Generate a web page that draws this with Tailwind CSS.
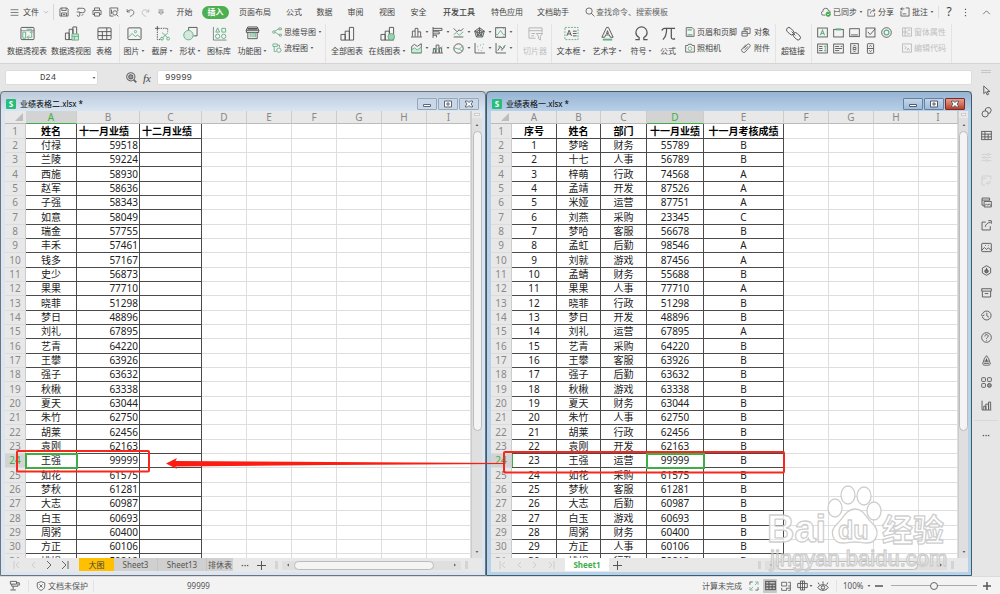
<!DOCTYPE html>
<html lang="zh-CN">
<head>
<meta charset="utf-8">
<meta name="viewport" content="width=device-width, initial-scale=1">
<title>业绩表格一.xlsx</title>
<script src="https://cdn.jsdelivr.net/npm/@tailwindcss/browser@4"></script>
</head>
<body class="h-screen overflow-hidden flex flex-col bg-[#e6e6e6] text-[8px] leading-3 text-[#444] whitespace-nowrap font-['Noto_Sans','Noto_Sans_CJK_SC',sans-serif]">

<!-- Icon library, all on a 16-unit grid -->
<svg class="hidden" aria-hidden="true">
  <symbol id="menu" viewBox="0 0 16 16"><path d="M1 3h14M1 8h14M1 13h14"/></symbol>
  <symbol id="chev" viewBox="0 0 16 16"><path d="M2 5l6 6 6-6"/></symbol>
  <symbol id="chevup" viewBox="0 0 16 16"><path d="M2 11l6-6 6 6"/></symbol>
  <symbol id="caret" viewBox="0 0 16 16"><path d="M2 4h12l-6 8z" fill="#666" stroke="none"/></symbol>
  <symbol id="save" viewBox="0 0 16 16"><path d="M1.500 3.500a2 2 0 0 1 2-2h9l2 2v11h-13zM4.500 1.500v4h7v-4M4 14.500v-5h8v5M6 12h4"/></symbol>
  <symbol id="pdf" viewBox="0 0 16 16"><path d="M3 5V2h8a3.500 3.500 0 0 1 0 7H6M1 8h5v5a2 2 0 0 1-4 0M9 14l3-3"/></symbol>
  <symbol id="print" viewBox="0 0 16 16"><path d="M4 5V1.500h8V5M4 12H1.500V5.500h13V12H12M4 9h8v5.500H4z"/></symbol>
  <symbol id="preview" viewBox="0 0 16 16"><path d="M14 7V1.500H1.500v13H7"/><circle cx="9.500" cy="9.500" r="3.500"/><path d="M12 12l3 3M4 4v7"/></symbol>
  <symbol id="undo" viewBox="0 0 16 16"><path d="M2 2v5h5M2 7c3-5 12-5 12 1 0 4-4 6-7 7"/></symbol>
  <symbol id="redo" viewBox="0 0 16 16"><path d="M14 2v5H9M14 7C11 2 2 2 2 8c0 4 4 6 7 7"/></symbol>
  <symbol id="qat" viewBox="0 0 16 16"><path d="M3 4h10M3 8h10l-5 5z"/></symbol>
  <symbol id="search" viewBox="0 0 16 16"><circle cx="6.500" cy="6.500" r="5"/><path d="M10 10l5 5"/></symbol>
  <symbol id="zoomin" viewBox="0 0 16 16"><circle cx="7" cy="7" r="6"/><circle cx="7" cy="7" r="3" fill="#999"/><path d="M11 11l4 4" stroke-width="2.500"/></symbol>
  <symbol id="cloud" viewBox="0 0 16 16"><path d="M7 13H4a3 3 0 0 1-1-6 4.500 4.500 0 0 1 9-1 3 3 0 0 1 3 3"/><circle cx="11.500" cy="11.500" r="3.500" fill="#3fae49" stroke="#3fae49"/><path d="M10 11.500l1.200 1.200 2-2" stroke="#fff"/></symbol>
  <symbol id="share" viewBox="0 0 16 16"><path d="M7 3H1.500v11.500h12V9M6 10c0-4 3-6 8-6M11 1l3.500 3L11 7"/></symbol>
  <symbol id="comment" viewBox="0 0 16 16"><path d="M1.500 6v8.500h13v-13H9M4 11h6M1 3h6M4 1L1 3l3 2"/></symbol>
  <symbol id="more" viewBox="0 0 16 16"><path d="M8 1.500v2M8 7v2M8 12.500v2" stroke-width="2"/></symbol>

  <symbol id="pivot" viewBox="0 0 16 16"><rect x="1" y="1.500" width="14" height="13" rx="1"/><path d="M1 5h14" stroke-width=".6"/><path d="M3 6.500h3v6.500H3zM8 12h4.500V6M10.500 7.500l2-2 2 2M9.500 10L7.500 12l2 2M7 3.500h6" stroke="#63b184"/></symbol>
  <symbol id="pivotchart" viewBox="0 0 16 16"><path d="M1.500 7.500h4v7h-4zM5.500 3.500h4v11h-4zM9.500 1h4v8h-4z"/><path d="M8.500 8.500h7v6.500h-7zM8.500 11h7M11 11v4" stroke="#63b184" fill="#cfe9d9"/></symbol>
  <symbol id="table" viewBox="0 0 16 16"><rect x="1" y="2" width="14" height="12.500" rx="1"/><path d="M1 6h14M1 10.200h14M5.700 6v8.500M10.400 2v12.500"/></symbol>
  <symbol id="image" viewBox="0 0 16 16"><rect x="1" y="2" width="14" height="12.500" rx="1"/><path d="M1.500 12l4-4 3.500 3.500 2-2 3.500 3" stroke="#63b184"/><circle cx="9" cy="6" r="1.200" stroke="#63b184"/></symbol>
  <symbol id="shot" viewBox="0 0 16 16"><path d="M2.500 0v5M0 2.500h5"/><path d="M6 2.500h7.500V6M2.500 6v8.500H7" stroke-dasharray="1.500 1"/><path d="M7.500 7l6 5.500M14 7l-6 5.500" stroke="#63b184"/><circle cx="7.500" cy="13.500" r="1.500" stroke="#63b184"/><circle cx="14" cy="13.500" r="1.500" stroke="#63b184"/></symbol>
  <symbol id="shape" viewBox="0 0 16 16"><path d="M6 5V1.500h9v9h-4"/><circle cx="5.800" cy="9.800" r="5" stroke="#63b184" fill="#d5e8dd"/></symbol>
  <symbol id="iconlib" viewBox="0 0 16 16"><path d="M1.500 1v14h14" stroke-width=".7"/><path d="M6 2l2 4.500H4zM10.500 2.500h4v4h-4z" stroke="#63b184"/><circle cx="6" cy="11" r="2.300" stroke="#63b184"/><circle cx="12.500" cy="11" r="2.300" stroke="#63b184"/></symbol>
  <symbol id="barcode" viewBox="0 0 16 16"><path d="M1 5l2-4h10l2 4zM1.500 5v2h13V5M3 7v6.500h10V7" /><path d="M2.500 3h11" stroke-width="2"/><path d="M5.500 7v5M7.500 7v5M9.500 7v5M11 7v5" stroke="#63b184"/></symbol>
  <symbol id="mind" viewBox="0 0 16 16"><g stroke="#63a57f"><circle cx="3" cy="8" r="2"/><path d="M4.500 6.500L11 3M5 8.500l7 4.500M11 1.500h4v3h-4zM12 11.500h3v3h-3z"/></g></symbol>
  <symbol id="flow" viewBox="0 0 16 16"><g stroke="#63a57f"><path d="M1.500 1.500h7v4h-7zM3.500 5.500v8H7M12 7V3.500H9"/><circle cx="11" cy="11.500" r="3.500"/></g></symbol>
  <symbol id="bars3" viewBox="0 0 16 16"><path d="M1 9h4.500v6H1zM5.500 5.500H10V15H5.500zM10 1.500h4.500V15H10z"/></symbol>
  <symbol id="onlinebars" viewBox="0 0 16 16"><path d="M1 9h4.500v6H1zM5.500 5.500H10V15H5.500zM10 1.500h4.500V15H10z"/><circle cx="12" cy="11.500" r="3.500" fill="#9fcfb3" stroke="#63b184"/></symbol>
  <symbol id="col" viewBox="0 0 16 16"><path d="M2 14V6h4v8M6 6V2h4v12M10 7h4v7M0 14.500h16"/></symbol>
  <symbol id="hbar" viewBox="0 0 16 16"><path d="M1.500 0v16M1.500 2h13v3h-13M1.500 7h9v3h-9M1.500 12h5v3"/></symbol>
  <symbol id="line" viewBox="0 0 16 16"><path d="M1 2l5 5 3-3 2 2 4-4M1 14.500h14"/><path d="M1 11l4-3 4 4 6-5" stroke="#63b184"/></symbol>
  <symbol id="radar" viewBox="0 0 16 16"><path d="M8 1l7 5-2.500 8.500h-9L1 6z" fill="#c9d6ce"/><path d="M8 4l4 3-1.500 5h-5L4 7zM8 1v8M1 6l7 3 7-3M3.500 14.500L8 9l4.500 5.500"/></symbol>
  <symbol id="stock" viewBox="0 0 16 16"><rect x="1" y="1" width="14" height="14"/><path d="M1 11h3l4-6 4 6h3M4 1v2M12 1v2M4 15v-2M12 15v-2" stroke="#63b184"/></symbol>
  <symbol id="area" viewBox="0 0 16 16"><path d="M1 14.500V5l4-3 4 3 6-4v13.500z"/><path d="M1 10l4-3 4 3 6-4v8H1z" stroke="#63b184" fill="#d5e8dd"/></symbol>
  <symbol id="combo" viewBox="0 0 16 16"><path d="M2 14V8h3v6M6 14V3h4v11M11 14V7h3v7M0 14.500h16"/><path d="M1 11l6-3 3 2 5-5" stroke="#63b184"/></symbol>
  <symbol id="pie" viewBox="0 0 16 16"><circle cx="8" cy="8" r="6.800"/><path d="M1.500 7L9 9l5-5M9 9l5 3" stroke="#63b184"/></symbol>
  <symbol id="scatter" viewBox="0 0 16 16"><path d="M1.500 0v14.500H16"/><path d="M5 5h1M9 3h1M12 7h1M6 10h1M10 11h1M13 2h1" stroke="#63b184" stroke-width="2"/></symbol>
  <symbol id="other" viewBox="0 0 16 16"><path d="M1.500 0v14.500H16"/><path d="M4 11l4-6 3 4 4-6" /><path d="M5 5h2M9 10h2M12 6h2" stroke="#63b184" stroke-width="2.500"/></symbol>
  <symbol id="slicer" viewBox="0 0 16 16"><path d="M8 13H1V2h14v5M1 5h14M3.500 8h4M3.500 10.500h3M9 8h6.500l-2.300 3v4l-2-1.500V11z"/></symbol>
  <symbol id="textbox" viewBox="0 0 16 16"><rect x="1" y="1.500" width="14" height="13" stroke="#63b184" stroke-dasharray="2 1.200"/><path d="M3 10.500L5.500 4.500 8 10.500M4 8.500h3M9.500 5.500h4M9.500 8h4M9.500 10.500h4"/></symbol>
  <symbol id="wordart" viewBox="0 0 16 16"><path d="M2 12L7 1.500h2L14 12h-3l-1-2.500H6L5 12zM8 5L7 8h2z"/><path d="M3 14.500h10" stroke="#63b184" stroke-width="2"/></symbol>
  <symbol id="omega" viewBox="0 0 16 16"><path d="M1.500 14.500h4v-2.200C3 11 2 9 2 7a6 6 0 0 1 12 0c0 2-1 4-3.500 5.300v2.200h4" stroke-width="1.300"/></symbol>
  <symbol id="pi" viewBox="0 0 16 16"><path d="M1 5c.5-2 1.500-2.500 3-2.500h11M6 3c0 5-1 9-4 11.500M11 3v9c0 2 2 2.500 4 1.500" stroke-width="1.300"/></symbol>
  <symbol id="headfoot" viewBox="0 0 16 16"><path d="M2 1h9.500L14.500 4v11H2z"/><path d="M4 4.500h7M4 12.500h8" stroke="#63b184" stroke-width="2"/></symbol>
  <symbol id="camera" viewBox="0 0 16 16"><path d="M1 4h3.500l1-2h5l1 2H15v10.500H1z"/><circle cx="8" cy="9" r="3" stroke="#63b184"/></symbol>
  <symbol id="object" viewBox="0 0 16 16"><path d="M5 6V1.500h9.500v9H11M1.500 7h8.500v7.500H1.500zM1.500 10H10M7 6V4h5"/></symbol>
  <symbol id="clip" viewBox="0 0 16 16"><path d="M4 9l6-6.500a2.500 2.500 0 0 1 4 3.500l-7 8a3.500 3.500 0 0 1-5-5l6-6.500M6 11l5-5.500"/></symbol>
  <symbol id="link" viewBox="0 0 16 16"><rect x="0" y="3" width="9" height="5" rx="2.500" transform="rotate(45 4.500 5.500)"/><rect x="7" y="8.500" width="9" height="5" rx="2.500" transform="rotate(45 11.500 11)"/><path d="M6 6l4 4"/></symbol>
  <symbol id="fLabel" viewBox="0 0 16 16"><rect x="1" y="1.500" width="14" height="13"/><path d="M5 12l3-7.500 3 7.500M6 9.500h4" stroke="#63b184" stroke-width="1.500"/></symbol>
  <symbol id="fGroup" viewBox="0 0 16 16"><rect x="1" y="3.500" width="14" height="11"/><path d="M4 3.500h8" stroke="#63b184" stroke-width="3"/></symbol>
  <symbol id="fButton" viewBox="0 0 16 16"><rect x="1" y="2.500" width="14" height="11.500"/><path d="M3 11.500h10"/></symbol>
  <symbol id="fCheck" viewBox="0 0 16 16"><rect x="1.500" y="1.500" width="13" height="13"/><path d="M4 7l3.500 4L14.500 3"/></symbol>
  <symbol id="fRadio" viewBox="0 0 16 16"><circle cx="8" cy="8" r="7"/><circle cx="8" cy="8" r="3.500" stroke="#63b184" stroke-width="1.800"/></symbol>
  <symbol id="fList" viewBox="0 0 16 16"><rect x="1" y="1.500" width="14" height="13"/><path d="M3 5h5M3 8h5M3 11h5"/><path d="M12 4v8M10.500 5.500L12 4l1.500 1.500M10.500 10.500L12 12l1.500-1.500" stroke="#63b184"/></symbol>
  <symbol id="fCombo" viewBox="0 0 16 16"><rect x="1" y="1.500" width="14" height="13"/><path d="M3 5h6M11 5h2.500M3 8h10M3 11h6"/></symbol>
  <symbol id="fScroll" viewBox="0 0 16 16"><rect x="2.500" y="1" width="11" height="14"/><path d="M6 5l2-2 2 2M6 11l2 2 2-2M6 6.500h4v3H6z"/></symbol>
  <symbol id="fSpin" viewBox="0 0 16 16"><rect x="3.500" y="1" width="9" height="14" rx="1"/><path d="M3.500 8h9M6 5.500l2-2 2 2M6 10.500l2 2 2-2"/></symbol>
  <symbol id="props" viewBox="0 0 16 16"><rect x="1" y="1.500" width="14" height="13"/><path d="M1 8h8M5 1.500v13M9 5h4M8 11h5"/></symbol>
  <symbol id="code" viewBox="0 0 16 16"><rect x="1" y="1.500" width="14" height="13"/><path d="M4 5l3 2.500L4 10M8 12l2-4 2 4"/></symbol>

  <symbol id="cursor" viewBox="0 0 16 16"><path d="M4 1.500v11l3-2.500 2 4.500 2-1-2-4h4z"/></symbol>
  <symbol id="shapes2" viewBox="0 0 16 16"><path d="M6.500 6V2.500L9 1h4l2 3.500-2 4.500h-3"/><circle cx="6" cy="10" r="4.500"/></symbol>
  <symbol id="grid" viewBox="0 0 16 16"><rect x="1" y="2" width="14" height="12"/><path d="M1 6h14M1 10h14M5.700 2v12M10.400 6v8"/></symbol>
  <symbol id="sliders" viewBox="0 0 16 16"><path d="M1 3.500h8M12 3.500h3M1 8h2M6 8h9M1 12.500h6M10 12.500h5"/><circle cx="10.500" cy="3.500" r="1.500"/><circle cx="4.500" cy="8" r="1.500"/><circle cx="8.500" cy="12.500" r="1.500"/></symbol>
  <symbol id="pivot2" viewBox="0 0 16 16"><path d="M6 14.500H1.500v-13h13V6M1.500 5h6M13 8v4H8M10 10l-2 2 2 2"/></symbol>
  <symbol id="layers" viewBox="0 0 16 16"><path d="M4 12H1.500V1.500h11V5M1.500 4.500h11M4.500 6.500H15V14.500H4.500zM5 13l3-3 2 2 2-2 3 3"/></symbol>
  <symbol id="export" viewBox="0 0 16 16"><path d="M7 3H1.500v11.500h12V9M6 10c1-4 4-6.500 8-6.500M10.500 1H15v4.500"/></symbol>
  <symbol id="pic" viewBox="0 0 16 16"><rect x="1" y="2" width="14" height="12" rx="1"/><path d="M1 12l4-4 3 3 2.500-2.500L15 12M10 5h1M6 5h1"/></symbol>
  <symbol id="hexa" viewBox="0 0 16 16"><path d="M8 1l6 3.500v7L8 15l-6-3.500v-7z"/><circle cx="8" cy="9" r="2.500" fill="#777"/><path d="M8 4v4"/></symbol>
  <symbol id="box" viewBox="0 0 16 16"><path d="M1 2.500h14V6H1zM2 6v8.500h12V6M5.500 9.500h5"/></symbol>
  <symbol id="history" viewBox="0 0 16 16"><path d="M2 6a6.500 6.500 0 1 1 0 4M0 6l2 3 3-2M8.500 4v4.500l3 2"/></symbol>
  <symbol id="help" viewBox="0 0 16 16"><circle cx="8" cy="8" r="7"/><path d="M5.500 6.500c0-3.500 5-3.500 5-.5 0 2-2.500 1.800-2.500 3.800M8 11.500v1.200"/></symbol>
  <symbol id="bell" viewBox="0 0 16 16"><path d="M8 1l3 4 2 6c2 3-1 4-5 4s-7-1-5-4l2-6z"/><path d="M5 9h6M4 12h8M8 5v3" stroke-width="1.800"/></symbol>
  <symbol id="apps" viewBox="0 0 16 16"><rect x="1" y="1" width="5.500" height="5.500" rx="1"/><rect x="9.500" y="1" width="5.500" height="5.500" rx="1"/><rect x="1" y="9.500" width="5.500" height="5.500" rx="1"/><circle cx="12.200" cy="12.200" r="2.800" fill="#999"/></symbol>
  <symbol id="chart" viewBox="0 0 16 16"><path d="M1.500 1v13.500H15M4 14V9h3v5M7 14V6h4v8M11 14V3h3v11"/></symbol>

  <symbol id="dock" viewBox="0 0 16 16"><path d="M2 2h9v4H2zM4 6v3h9V5M11 4h4v4M2 14.500h8M6 9v5"/></symbol>
  <symbol id="shield" viewBox="0 0 16 16"><path d="M8 1l6 2v5c0 4-3 6-6 7-3-1-6-3-6-7V3zM5.500 5.500l5 5M10.500 5.500l-5 5"/></symbol>
  <symbol id="full" viewBox="0 0 16 16"><path d="M1.500 6V1.500H6M10 14.500h4.500V10"/><path d="M10 1.500h4.500V6M6 14.500H1.500V10M9.500 6.500l4-4M6.500 9.500l-4 4" stroke="#63b184"/></symbol>
  <symbol id="pagebreak" viewBox="0 0 16 16"><path d="M1 2h8v6H1zM15 2v13M11.500 2H15M1 11v4h8v-4M9 11.500h6M11.500 8H15M11.500 15H15"/></symbol>
  <symbol id="crossview" viewBox="0 0 16 16"><path d="M5 1.500h6v13H5zM1 5h14v6H1zM8 1.500v13"/></symbol>
  <symbol id="eye" viewBox="0 0 16 16"><path d="M1 10c3-5 11-5 14 0-3 5-11 5-14 0zM3 6L1.500 3.500M8 5V2M13 6l1.500-2.500"/><circle cx="8" cy="10" r="2.300"/></symbol>
</svg>

<!-- Menu row and ribbon -->
<header class="shrink-0 bg-[#f3f3f3] border-b border-[#d4d4d4] [&_svg]:fill-none [&_svg]:stroke-[#555] [&_svg]:stroke-[1.3] [&_svg]:shrink-0">
  <nav class="flex items-center h-6" aria-label="菜单">
    <button class="flex items-center gap-1 pl-[10px] w-[53px]"><svg class="size-[9px]"><use href="#menu"/></svg>文件<svg class="size-[6px] opacity-60"><use href="#chev"/></svg></button>
    <span class="w-px h-4 bg-[#d8d8d8]"></span>
    <div class="flex items-center w-[111px] justify-between pl-[5px]">
      <button aria-label="保存"><svg class="size-[10px]"><use href="#save"/></svg></button>
      <button aria-label="输出为PDF"><svg class="size-[10px]"><use href="#pdf"/></svg></button>
      <button aria-label="打印"><svg class="size-[10px]"><use href="#print"/></svg></button>
      <button aria-label="打印预览"><svg class="size-[10px]"><use href="#preview"/></svg></button>
      <button aria-label="撤销"><svg class="size-[9px]"><use href="#undo"/></svg></button>
      <button aria-label="恢复" class="opacity-40"><svg class="size-[9px]"><use href="#redo"/></svg></button>
      <button aria-label="自定义快速访问"><svg class="size-2"><use href="#qat"/></svg></button>
    </div>
    <div class="flex items-center ml-1">
      <button class="w-[31px]">开始</button>
      <button class="w-[27px] mx-[2px] h-[13px] rounded-full bg-[#4caf50] text-white font-bold">插入</button>
      <button class="w-12">页面布局</button>
      <button class="w-[30px]">公式</button>
      <button class="w-[31px]">数据</button>
      <button class="w-[31px]">审阅</button>
      <button class="w-[32px]">视图</button>
      <button class="w-[31px]">安全</button>
      <button class="w-[50px] font-medium">开发工具</button>
      <button class="w-[46px]">特色应用</button>
      <button class="w-[46px]">文档助手</button>
    </div>
    <label class="flex items-center gap-px ml-[9px]"><svg class="size-[10px]"><use href="#search"/></svg><input class="w-[90px] outline-none bg-transparent placeholder:text-[#666]" aria-label="查找" placeholder="查找命令、搜索模板"></label>
    <div class="flex items-center ml-auto pr-[9px]">
      <button class="flex items-center gap-[2px] w-[46px]"><svg class="size-[10px]"><use href="#cloud"/></svg>已同步<svg class="size-1"><use href="#caret"/></svg></button>
      <button class="flex items-center gap-[2px] w-[33px]"><svg class="size-[9px]"><use href="#share"/></svg>分享</button>
      <button class="flex items-center gap-[2px] w-[38px]"><svg class="size-[10px]"><use href="#comment"/></svg>批注<svg class="size-1"><use href="#caret"/></svg></button>
      <span class="w-px h-3 bg-[#ddd]"></span>
      <button class="w-5 text-[12px]">?</button>
      <button class="w-3 flex justify-center" aria-label="更多"><svg class="size-[9px]"><use href="#more"/></svg></button>
      <button class="w-5 flex justify-end" aria-label="收起功能区"><svg class="size-[9px]"><use href="#chevup"/></svg></button>
    </div>
  </nav>

  <div class="flex h-[39px] pl-[5px] [&>button]:flex [&>button]:flex-col [&>button]:items-center [&>button]:gap-1 [&>button]:pt-[2px] [&>button]:shrink-0 [&>span]:w-px [&>span]:shrink-0 [&>span]:bg-[#e3e3e3] [&>button>svg]:size-[15px] [&>button>svg]:stroke-1 [&>button>i]:flex [&>button>i]:items-center [&>button>i]:gap-px [&>button>i]:not-italic [&_i_svg]:size-1">
    <button class="w-11"><svg><use href="#pivot"/></svg>数据透视表</button>
    <button class="w-11"><svg><use href="#pivotchart"/></svg>数据透视图</button>
    <button class="w-[22px]"><svg><use href="#table"/></svg>表格</button>
    <span class="ml-1"></span>
    <button class="w-7"><svg><use href="#image"/></svg><i>图片<svg><use href="#caret"/></svg></i></button>
    <button class="w-7"><svg><use href="#shot"/></svg><i>截屏<svg><use href="#caret"/></svg></i></button>
    <button class="w-7"><svg><use href="#shape"/></svg><i>形状<svg><use href="#caret"/></svg></i></button>
    <button class="w-[30px]"><svg><use href="#iconlib"/></svg>图标库</button>
    <button class="w-9"><svg><use href="#barcode"/></svg><i>功能图<svg><use href="#caret"/></svg></i></button>
    <div class="w-[53px] flex flex-col pl-[2px]">
      <button class="flex items-center gap-[2px] h-4"><svg class="size-[10px]"><use href="#mind"/></svg>思维导图<svg class="size-1"><use href="#caret"/></svg></button>
      <button class="flex items-center gap-[2px] h-4"><svg class="size-[10px]"><use href="#flow"/></svg>流程图<svg class="size-1"><use href="#caret"/></svg></button>
    </div>
    <span class="ml-[2px] mr-px"></span>
    <button class="w-10"><svg><use href="#bars3"/></svg>全部图表</button>
    <button class="w-10"><svg><use href="#onlinebars"/></svg><i>在线图表<svg><use href="#caret"/></svg></i></button>
    <div class="grid grid-cols-5 grid-rows-[16px_16px] w-[105px] ml-[4px] [&_button]:flex [&_button]:items-center [&_button]:gap-[3px] [&_svg:first-child]:size-[11px] [&_svg:last-child]:size-1">
      <button aria-label="柱形图"><svg><use href="#col"/></svg><svg><use href="#caret"/></svg></button>
      <button aria-label="条形图"><svg><use href="#hbar"/></svg><svg><use href="#caret"/></svg></button>
      <button aria-label="折线图"><svg><use href="#line"/></svg><svg><use href="#caret"/></svg></button>
      <button aria-label="雷达图"><svg><use href="#radar"/></svg><svg><use href="#caret"/></svg></button>
      <button aria-label="股价图"><svg><use href="#stock"/></svg><svg><use href="#caret"/></svg></button>
      <button aria-label="面积图"><svg><use href="#area"/></svg><svg><use href="#caret"/></svg></button>
      <button aria-label="组合图"><svg><use href="#combo"/></svg><svg><use href="#caret"/></svg></button>
      <button aria-label="饼图"><svg><use href="#pie"/></svg><svg><use href="#caret"/></svg></button>
      <button aria-label="散点图"><svg><use href="#scatter"/></svg><svg><use href="#caret"/></svg></button>
      <button aria-label="其他图表"><svg><use href="#other"/></svg><svg><use href="#caret"/></svg></button>
    </div>
    <span class="ml-px mr-px"></span>
    <button class="w-8 text-[#c0c0c0]" disabled><svg class="opacity-40"><use href="#slicer"/></svg>切片器</button>
    <span class="mr-px"></span>
    <button class="w-9"><svg><use href="#textbox"/></svg><i>文本框<svg><use href="#caret"/></svg></i></button>
    <button class="w-9"><svg><use href="#wordart"/></svg><i>艺术字<svg><use href="#caret"/></svg></i></button>
    <button class="w-[32px]"><svg><use href="#omega"/></svg><i>符号<svg><use href="#caret"/></svg></i></button>
    <button class="w-[22px]"><svg><use href="#pi"/></svg>公式</button>
    <div class="flex flex-col ml-[6px] w-[56px] [&_button]:flex [&_button]:items-center [&_button]:gap-[2px] [&_button]:h-4 [&_svg]:size-[10px]">
      <button><svg><use href="#headfoot"/></svg>页眉和页脚</button>
      <button><svg><use href="#camera"/></svg>照相机</button>
    </div>
    <div class="flex flex-col w-[33px] [&_button]:flex [&_button]:items-center [&_button]:gap-[3px] [&_button]:h-4 [&_svg]:size-[10px]">
      <button><svg><use href="#object"/></svg>对象</button>
      <button><svg><use href="#clip"/></svg>附件</button>
    </div>
    <span class="ml-px"></span>
    <button class="w-8 ml-px"><svg><use href="#link"/></svg>超链接</button>
    <span class="ml-[2px]"></span>
    <div class="grid grid-cols-5 grid-rows-[16px_16px] w-[80px] ml-[5px] [&_svg]:size-[11px]">
      <button aria-label="标签"><svg><use href="#fLabel"/></svg></button>
      <button aria-label="分组框"><svg><use href="#fGroup"/></svg></button>
      <button aria-label="按钮"><svg><use href="#fButton"/></svg></button>
      <button aria-label="复选框"><svg><use href="#fCheck"/></svg></button>
      <button aria-label="选项按钮"><svg><use href="#fRadio"/></svg></button>
      <button aria-label="列表框"><svg><use href="#fList"/></svg></button>
      <button aria-label="组合框"><svg><use href="#fCombo"/></svg></button>
      <button aria-label="滚动条"><svg><use href="#fScroll"/></svg></button>
      <button aria-label="微调项"><svg><use href="#fSpin"/></svg></button>
    </div>
    <div class="flex flex-col ml-[5px] w-[49px] text-[#c0c0c0] [&_button]:flex [&_button]:items-center [&_button]:gap-[2px] [&_button]:h-4 [&_svg]:size-[10px] [&_svg]:opacity-40">
      <button disabled><svg><use href="#props"/></svg>窗体属性</button>
      <button disabled><svg><use href="#code"/></svg>编辑代码</button>
    </div>
    <span></span>
  </div>
</header>

<div class="flex flex-1 min-h-0">
  <div class="flex flex-col flex-1 min-w-0">
    <!-- Name box and formula bar -->
    <div class="flex items-center h-[27px] shrink-0 pl-[5px] font-['Liberation_Mono',monospace] text-[9px]">
      <label class="flex items-center w-[93px] h-[15px] bg-white rounded-[2px] border border-[#ddd] pr-px">
        <input class="flex-1 min-w-0 text-center outline-none pr-0.5" aria-label="名称框" value="D24"><svg class="size-1"><use href="#caret"/></svg>
      </label>
      <button class="ml-7" aria-label="浏览公式"><svg class="size-[11px] fill-none stroke-[#666] stroke-[1.5]"><use href="#zoomin"/></svg></button>
      <span class="ml-[6px] w-[14px] text-[11px] italic font-['Liberation_Serif',serif]">fx</span>
      <input class="flex-1 min-w-0 h-[15px] bg-white rounded-[2px] border border-[#ddd] pl-[7px] outline-none" aria-label="编辑栏" value="99999">
    </div>

    <!-- Two workbook windows side by side -->
    <main class="relative grid grid-cols-2 flex-1 min-h-0 bg-[#d0d0d0]">
      <section class="flex flex-col min-w-0 min-h-0 rounded-t-[4px] border border-[#707478] bg-[#dae6f4] bg-linear-to-b from-[#bccbdb] to-[#dae6f4] to-[20px] px-[4px] pr-[3px] pb-[3px]" aria-label="业绩表格二">
        <div class="flex items-center h-[19px] shrink-0 pt-1 pl-px pr-[3px]">
          <span class="size-[10px] rounded-[1px] bg-[#28bd7c] text-white text-center leading-[10px] font-bold">S</span>
          <h2 class="ml-1 text-black">业绩表格二.xlsx *</h2>
          <div class="flex gap-px ml-auto [&>button]:w-5 [&>button]:h-3 [&>button]:rounded-[1px] [&>button]:border [&>button]:border-[#9aa7ba] [&>button]:bg-[#c9d8e9] [&>button]:flex [&>button]:items-center [&>button]:justify-center [&_svg]:size-[8px] [&_svg]:fill-white [&_svg]:stroke-[#5f6674]">
            <button aria-label="最小化"><svg viewBox="0 0 8 8"><path d="M.500 4.500h7v2h-7z"/></svg></button>
            <button aria-label="最大化"><svg viewBox="0 0 8 8"><path d="M.500 1h7v6h-7zM3 3h2v2H3z"/></svg></button>
            <button aria-label="关闭"><svg viewBox="0 0 8 8"><path d="M.500 1h2L4 2.500 5.500 1h2v1L6 4l1.500 2v1h-2L4 5.500 2.500 7h-2V6L2 4 .500 2z"/></svg></button>
          </div>
        </div>
        <div class="flex flex-1 min-h-0 bg-white">
          <div class="flex-1 min-w-0 overflow-hidden">
            <table id="sheetLeft" class="w-full table-fixed border-separate border-spacing-0 text-[10px] leading-[13px]"></table>
          </div>
          <div class="flex flex-col items-center w-[11px] shrink-0 bg-[#dfdfdf] border-l border-[#ccc]">
            <span class="w-full h-[7px] pt-[2px] px-[2px] bg-[#e8e8e8]"><span class="block h-[3px] bg-[#f8f8f8] border border-[#ccc]"></span></span>
            <button class="h-[13px]" aria-label="向上滚动"><svg class="size-1 rotate-180"><use href="#caret"/></svg></button>
            <span class="w-[9px] h-[300px] rounded-full bg-[#f4f4f4] border border-[#bbb]"></span>
            <button class="mt-auto h-[12px]" aria-label="向下滚动"><svg class="size-1"><use href="#caret"/></svg></button>
          </div>
        </div>
        <div class="flex items-center h-[14px] shrink-0 bg-[#e8e8e8]">
          <div class="flex items-center justify-between w-[74px] pl-2 pr-[10px] [&_svg]:size-2 [&_svg]:fill-none [&_svg]:stroke-[#666]">
            <button class="opacity-20" aria-label="第一张"><svg viewBox="0 0 8 8"><path d="M1 0v8M6 1L3 4l3 3"/></svg></button>
            <button class="opacity-20" aria-label="上一张"><svg viewBox="0 0 8 8"><path d="M6 1L3 4l3 3"/></svg></button>
            <button aria-label="下一张"><svg viewBox="0 0 8 8"><path d="M2 0l4 4-4 4"/></svg></button>
            <button aria-label="最后一张"><svg viewBox="0 0 8 8"><path d="M7 0v8M1 0l4 4-4 4"/></svg></button>
          </div>
          <div class="flex h-[13px] self-start bg-[#d0d0d0] text-[#555]">
            <button class="w-[35px] bg-[#ffc000] text-[#444]">大图</button>
            <button class="w-11 border-r border-[#c4c4c4]">Sheet3</button>
            <button class="w-[49px] border-r border-[#c4c4c4]">Sheet13</button>
            <button class="w-[26px]">排休表</button>
          </div>
          <button class="w-6 text-[10px]" aria-label="更多工作表">···</button>
          <button class="w-3" aria-label="新建工作表"><svg class="size-[9px] stroke-[#555]" viewBox="0 0 9 9"><path d="M0 4.500h9M4.500 0v9"/></svg></button>
          <span class="w-[3px] h-2 ml-[6px] bg-[#d4d4d4]"></span>
          <div class="flex items-center flex-1 h-[9px] mx-1 px-1 gap-1 bg-[#dfdfdf]">
            <svg class="size-1 rotate-90"><use href="#caret"/></svg>
            <span class="w-[140px] h-[9px] rounded-full bg-[#f4f4f4] border border-[#bbb]"></span>
            <svg class="size-1 -rotate-90 ml-auto"><use href="#caret"/></svg>
          </div>
          <span class="w-[3px] h-2 mr-[14px] bg-[#d4d4d4]"></span>
        </div>
      </section>

      <section class="flex flex-col min-w-0 min-h-0 rounded-t-[4px] border border-[#35606c] bg-[#b9d1ea] bg-linear-to-b from-[#98b4d2] to-[#b9d1ea] to-[20px] px-[4px] pr-[3px] pb-[3px]" aria-label="业绩表格一">
        <div class="flex items-center h-[19px] shrink-0 pt-1 pl-px pr-[3px]">
          <span class="size-[10px] rounded-[1px] bg-[#28bd7c] text-white text-center leading-[10px] font-bold">S</span>
          <h2 class="ml-1 text-black">业绩表格一.xlsx *</h2>
          <div class="flex gap-px ml-auto [&>button]:w-5 [&>button]:h-3 [&>button]:rounded-[1px] [&>button]:border [&>button]:flex [&>button]:items-center [&>button]:justify-center [&_svg]:size-[8px] [&_svg]:fill-white [&_svg]:stroke-[#555b68]">
            <button class="border-[#64809f] bg-linear-to-b from-[#c3d6eb] to-[#9dbbdb]" aria-label="最小化"><svg viewBox="0 0 8 8"><path d="M.500 4.500h7v2h-7z"/></svg></button>
            <button class="border-[#64809f] bg-linear-to-b from-[#c3d6eb] to-[#9dbbdb]" aria-label="最大化"><svg viewBox="0 0 8 8"><path d="M.500 1h7v6h-7zM3 3h2v2H3z"/></svg></button>
            <button class="border-[#7c2a22] bg-linear-to-b from-[#e0a093] to-[#c23c22]" aria-label="关闭"><svg viewBox="0 0 8 8"><path d="M.500 1h2L4 2.500 5.500 1h2v1L6 4l1.500 2v1h-2L4 5.500 2.500 7h-2V6L2 4 .500 2z"/></svg></button>
          </div>
        </div>
        <div class="flex flex-1 min-h-0 bg-white">
          <div class="flex-1 min-w-0 overflow-hidden">
            <table id="sheetRight" class="w-full table-fixed border-separate border-spacing-0 text-[10px] leading-[13px]"></table>
          </div>
          <div class="flex flex-col items-center w-[10px] shrink-0 bg-[#dfdfdf] border-l border-[#ccc]">
            <span class="w-full h-[7px] pt-[2px] px-[2px] bg-[#e8e8e8]"><span class="block h-[3px] bg-[#f8f8f8] border border-[#ccc]"></span></span>
            <button class="h-[13px]" aria-label="向上滚动"><svg class="size-1 rotate-180"><use href="#caret"/></svg></button>
            <span class="w-[9px] h-[300px] rounded-full bg-[#f4f4f4] border border-[#bbb]"></span>
            <button class="mt-auto h-[12px]" aria-label="向下滚动"><svg class="size-1"><use href="#caret"/></svg></button>
          </div>
        </div>
        <div class="flex items-center h-[14px] shrink-0 bg-[#e8e8e8]">
          <div class="flex items-center justify-between w-[74px] pl-2 pr-[10px] [&_svg]:size-2 [&_svg]:fill-none [&_svg]:stroke-[#666] opacity-20">
            <button aria-label="第一张"><svg viewBox="0 0 8 8"><path d="M1 0v8M6 1L3 4l3 3"/></svg></button>
            <button aria-label="上一张"><svg viewBox="0 0 8 8"><path d="M6 1L3 4l3 3"/></svg></button>
            <button aria-label="下一张"><svg viewBox="0 0 8 8"><path d="M2 1l3 3-3 3"/></svg></button>
            <button aria-label="最后一张"><svg viewBox="0 0 8 8"><path d="M7 0v8M2 1l3 3-3 3"/></svg></button>
          </div>
          <button class="w-11 h-[13px] self-start bg-white text-[#3fae49] font-bold">Sheet1</button>
          <button class="ml-1 w-3" aria-label="新建工作表"><svg class="size-[9px] stroke-[#555]" viewBox="0 0 9 9"><path d="M0 4.500h9M4.500 0v9"/></svg></button>
          <span class="w-[3px] h-2 ml-auto bg-[#d4d4d4]"></span>
          <div class="flex items-center w-[182px] h-[9px] mx-1 px-1 gap-1 bg-[#dfdfdf]">
            <svg class="size-1 rotate-90"><use href="#caret"/></svg>
            <span class="w-[141px] h-[9px] rounded-full bg-[#f4f4f4] border border-[#bbb]"></span>
            <svg class="size-1 -rotate-90 ml-auto"><use href="#caret"/></svg>
          </div>
          <span class="w-[3px] h-2 mr-[14px] bg-[#d4d4d4]"></span>
        </div>
      </section>

      <!-- Annotations: boxed rows and the arrow between them -->
      <svg class="absolute left-0 top-0 w-full h-full overflow-visible pointer-events-none" aria-hidden="true">
        <g fill="none" stroke="#f8271b" stroke-width="2">
          <rect x="17" y="360" width="132" height="20.500" rx="1"/>
          <rect x="504" y="361" width="280" height="20.500" rx="1"/>
        </g>
        <path d="M166 372.500l11-5.500-1.500 3L330 371l174 1v1l-174 1-154.500 1.500 1.500 2.500z" fill="#fb1d12"/>
      </svg>

      <!-- Site watermark -->
      <svg class="absolute right-[20px] bottom-0 w-[190px] h-[100px] pointer-events-none overflow-visible" viewBox="0 0 190 100" aria-hidden="true">
        <g fill="#fff" fill-opacity=".85" stroke="#c6c6c6" stroke-opacity=".85" stroke-width="1.300" stroke-linejoin="round" class="font-['Liberation_Sans','Noto_Sans_CJK_SC',sans-serif] font-bold">
          <ellipse cx="73" cy="32" rx="7" ry="9"/>
          <ellipse cx="86" cy="19" rx="7" ry="9"/>
          <ellipse cx="102" cy="20" rx="7" ry="9"/>
          <ellipse cx="112" cy="35" rx="7" ry="9"/>
          <path d="M93 33c9 0 11 9 17 14 9 8 5 20-5 20-5 0-8-1-12-1s-7 1-12 1c-11 0-14-12-6-19 6-5 9-15 18-15z"/>
          <text x="5" y="66" font-size="38">Bai</text>
          <text x="76" y="63" font-size="25">du</text>
          <text x="120" y="65" font-size="31">经验</text>
          <text x="8" y="90" font-size="22" font-weight="400">jingyan.baidu.com</text>
        </g>
      </svg>
    </main>
  </div>

  <!-- Task pane rail -->
  <aside class="flex flex-col items-center w-7 shrink-0 pt-[6px] [&_svg]:size-[11px] [&_svg]:fill-none [&_svg]:stroke-[#555] [&_svg]:stroke-[1.3]">
    <span class="w-[10px] h-[3px] border-y border-[#c6c6c6]"></span>
    <div class="flex flex-col justify-between h-[337px] mt-[6px] [&>button]:h-[22px]">
      <button aria-label="选择"><svg><use href="#cursor"/></svg></button>
      <button aria-label="形状"><svg><use href="#shapes2"/></svg></button>
      <button aria-label="表格"><svg><use href="#grid"/></svg></button>
      <button aria-label="属性" class="opacity-15"><svg><use href="#sliders"/></svg></button>
      <button aria-label="透视表" class="opacity-15"><svg><use href="#pivot2"/></svg></button>
      <button aria-label="素材"><svg><use href="#layers"/></svg></button>
      <button aria-label="导出"><svg><use href="#export"/></svg></button>
      <button aria-label="图片"><svg><use href="#pic"/></svg></button>
      <button aria-label="分析"><svg><use href="#hexa"/></svg></button>
      <button aria-label="归档"><svg><use href="#box"/></svg></button>
      <button aria-label="历史"><svg><use href="#history"/></svg></button>
      <button aria-label="帮助"><svg><use href="#help"/></svg></button>
      <button aria-label="提醒"><svg><use href="#bell"/></svg></button>
      <button aria-label="应用"><svg><use href="#apps"/></svg></button>
      <button aria-label="图表"><svg><use href="#chart"/></svg></button>
    </div>
    <span class="w-6 h-px mt-1 bg-[#d8d8d8]"></span>
    <button class="mt-2 text-[10px]" aria-label="更多">···</button>
  </aside>
</div>

<!-- Status bar -->
<footer class="flex items-center h-[18px] shrink-0 bg-[#f3f3f3] border-t border-[#dcdcdc] text-[#555] [&_svg]:fill-none [&_svg]:stroke-[#555]">
  <button class="w-7 pl-[9px]" aria-label="视图布局"><svg class="size-[11px] stroke-[1.3]"><use href="#dock"/></svg></button>
  <span class="w-px h-3 bg-[#e2e2e2]"></span>
  <button class="flex items-center gap-[2px] pl-[7px] w-16"><svg class="size-[10px] stroke-[1.3]"><use href="#shield"/></svg>文档未保护</button>
  <span class="w-px h-3 bg-[#e2e2e2]"></span>
  <output class="ml-[93px]">99999</output>
  <div class="flex items-center ml-auto pr-[9px]">
    <span class="mr-[7px]">计算未完成</span>
    <button class="w-[14px]" aria-label="全屏"><svg class="size-[10px] stroke-[1.3]"><use href="#full"/></svg></button>
    <button class="w-[14px] h-[14px] flex items-center justify-center rounded-[1px] bg-[#c8c8c8] mr-1" aria-label="普通视图"><svg class="size-[11px] stroke-[1.5]"><use href="#grid"/></svg></button>
    <button class="w-4" aria-label="分页预览"><svg class="size-[10px] stroke-[1.3]"><use href="#pagebreak"/></svg></button>
    <button class="w-[20px] flex items-center gap-px" aria-label="阅读模式"><svg class="size-[11px] stroke-[1.3]"><use href="#crossview"/></svg><svg class="size-1"><use href="#caret"/></svg></button>
    <button class="w-[19px]" aria-label="护眼模式"><svg class="size-[12px] stroke-[1.3]"><use href="#eye"/></svg></button>
    <span class="w-px h-3 bg-[#e2e2e2]"></span>
    <button class="flex items-center gap-1 w-[38px] pl-[6px]">100%<svg class="size-1"><use href="#caret"/></svg></button>
    <button class="w-4 h-2 flex items-center" aria-label="缩小"><svg class="size-2 stroke-[1.5]" viewBox="0 0 8 8"><path d="M0 4h8"/></svg></button>
    <input type="range" min="0" max="100" value="50" aria-label="显示比例" class="w-[86px] h-2 appearance-none bg-[linear-gradient(#aaa,#aaa)] bg-[length:100%_1px] bg-center bg-no-repeat [&::-webkit-slider-thumb]:appearance-none [&::-webkit-slider-thumb]:size-2 [&::-webkit-slider-thumb]:rounded-full [&::-webkit-slider-thumb]:border [&::-webkit-slider-thumb]:border-[#666] [&::-webkit-slider-thumb]:bg-[#f3f3f3]">
    <button class="w-[14px] h-2 flex items-center justify-end" aria-label="放大"><svg class="size-2 stroke-[1.5]" viewBox="0 0 8 8"><path d="M0 4h8M4 0v8"/></svg></button>
  </div>
</footer>

<script>
  const staff = [
    ['梦啥','财务',55789,'B'],['十七','人事',56789,'B'],['梓萌','行政',74568,'A'],['孟靖','开发',87526,'A'],
    ['米娅','运营',87751,'A'],['刘燕','采购',23345,'C'],['梦哈','客服',56678,'B'],['孟虹','后勤',98546,'A'],
    ['刘就','游戏',87456,'A'],['孟蜻','财务',55688,'B'],['果果','人事',77710,'A'],['晓菲','行政',51298,'B'],
    ['梦日','开发',48896,'B'],['刘礼','运营',67895,'A'],['艺青','采购',64220,'B'],['王攀','客服',63926,'B'],
    ['强子','后勤',63632,'B'],['秋楸','游戏',63338,'B'],['夏天','财务',63044,'B'],['朱竹','人事',62750,'B'],
    ['胡莱','行政',62456,'B'],['袁刚','开发',62163,'B'],['王强','运营',99999,'B'],['如花','采购',61575,'B'],
    ['梦秋','客服',61281,'B'],['大志','后勤',60987,'B'],['白玉','游戏',60693,'B'],['周粥','财务',60400,'B'],
    ['方正','人事',60106,'B'],['姚娟','行政',59812,'B']
  ];
  const early = [['付禄',59518],['兰陵',59224],['西施',58930],['赵军',58636],['子强',58343],['如意',58049],
    ['瑞金',57755],['丰禾',57461],['钱多',57167],['史少',56873]];

  const rightRows = [['序号','姓名','部门','十一月业绩','十一月考核成绩'], ...staff.map((r, i) => [i + 1, ...r])];
  const leftRows = [['姓名','十一月业绩','十二月业绩'],
    ...early.map(r => [...r, '']), ...staff.slice(10).map(r => [r[0], r[2], ''])];

  function build(id, rows, widths, activeCol, align) {
    const used = rows[0].length;
    let html = '<colgroup>' + widths.map(w => w ? `<col style="width:${w}px">` : '<col>').join('') + '</colgroup>';
    html += '<thead><tr class="h-[13px] leading-[12px] text-[#888]"><th class="p-0 bg-[#e8e8e8] border-b border-[#bbb]"><svg class="ml-auto mr-[3px] size-2" viewBox="0 0 8 8"><path d="M8 0v8H0z" fill="#bdbdbd"/></svg></th>';
    for (let c = 0; c < 9; c++) {
      html += `<th scope="col" class="p-0 font-normal border-b border-r ${c === activeCol ? 'bg-[#d3d3d3] text-[#3fae49] border-b-[#3fae49] border-r-[#ccc]' : 'bg-[#e8e8e8] border-b-[#bbb] border-r-[#ccc]'}">${'ABCDEFGHI'[c]}</th>`;
    }
    html += '</tr></thead><tbody class="text-[#222]">';
    rows.forEach((row, r) => {
      const h = r % 3 === 0 ? 'h-[15px]' : 'h-[14px]';
      html += `<tr class="${h}"><th scope="row" class="p-0 font-normal border-b border-b-[#dcdcdc] border-r border-r-[#ccc] ${r === 23 ? 'bg-[#d3d3d3] text-[#3fae49]' : 'bg-[#e8e8e8] text-[#888]'}">${r + 1}</th>`;
      for (let c = 0; c < 9; c++) {
        const line = c < used ? 'border-[#4a4a4a]' : 'border-[#dedede]';
        const weight = r === 0 ? 'font-bold text-black' : '';
        const place = c < used ? align(r, c) : '';
        const active = r === 23 && c === activeCol ? 'outline-2 -outline-offset-1 outline-[#3fae49]' : '';
        html += `<td class="p-0 border-b border-r ${line} ${weight} ${place} ${active}">${c < used ? row[c] : ''}</td>`;
      }
      html += '</tr>';
    });
    document.getElementById(id).innerHTML = html + '</tbody>';
  }

  build('sheetLeft', leftRows, [21, 51, 63, 62, 45, 45, 45, 45, 45, 0], 0,
    (r, c) => c === 0 ? 'text-center' : r === 0 ? 'text-left pl-[2px]' : 'text-right pr-px');
  build('sheetRight', rightRows, [21, 45, 44, 46, 57, 80, 45, 45, 45, 0], 3,
    (r, c) => r === 23 && c === 0 ? 'text-center shadow-[inset_1px_0_#3fae49]' : 'text-center');
</script>
</body>
</html>
